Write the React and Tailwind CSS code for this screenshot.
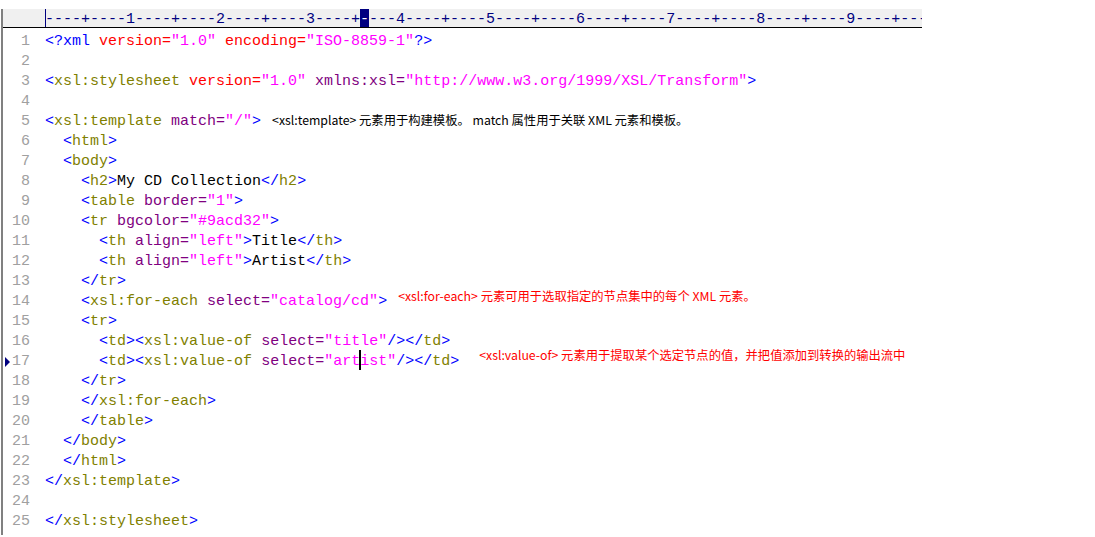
const b = "text-[#0000ff]";
const o = "text-[#808000]";
const r = "text-[#ff0000]";
const p = "text-[#800080]";
const m = "text-[#ff00ff]";
const k = "text-black";

const open = (name, attrs = [], close = ">") => [
  [b, "<"],
  [o, name],
  ...attrs.flatMap(([a, v, c]) => [[k, " "], [c || p, a + "="], [m, `"${v}"`]]),
  [b, close],
];
const end = (name) => [[b, "</"], [o, name], [b, ">"]];
const ind = (n) => [[k, " ".repeat(n)]];

const lines = [
  [[b, "<?xml"], [k, " "], [r, "version="], [m, '"1.0"'], [k, " "], [r, "encoding="], [m, '"ISO-8859-1"'], [b, "?>"]],
  [],
  open("xsl:stylesheet", [["version", "1.0", r], ["xmlns:xsl", "http://www.w3.org/1999/XSL/Transform"]]),
  [],
  open("xsl:template", [["match", "/"]]),
  [...ind(2), ...open("html")],
  [...ind(2), ...open("body")],
  [...ind(4), ...open("h2"), [k, "My CD Collection"], ...end("h2")],
  [...ind(4), ...open("table", [["border", "1"]])],
  [...ind(4), ...open("tr", [["bgcolor", "#9acd32"]])],
  [...ind(6), ...open("th", [["align", "left"]]), [k, "Title"], ...end("th")],
  [...ind(6), ...open("th", [["align", "left"]]), [k, "Artist"], ...end("th")],
  [...ind(4), ...end("tr")],
  [...ind(4), ...open("xsl:for-each", [["select", "catalog/cd"]])],
  [...ind(4), ...open("tr")],
  [...ind(6), ...open("td"), ...open("xsl:value-of", [["select", "title"]], "/>"), ...end("td")],
  "cursor",
  [...ind(4), ...end("tr")],
  [...ind(4), ...end("xsl:for-each")],
  [...ind(4), ...end("table")],
  [...ind(2), ...end("body")],
  [...ind(2), ...end("html")],
  end("xsl:template"),
  [],
  end("xsl:stylesheet"),
];

const notes = {
  5: { text: "<xsl:template> 元素用于构建模板。 match 属性用于关联 XML 元素和模板。", cls: "ml-[11px] -top-[2px] text-black" },
  14: { text: "<xsl:for-each> 元素可用于选取指定的节点集中的每个 XML 元素。", cls: "ml-[11px] -top-[6px] text-[#ff0000]" },
  17: { text: "<xsl:value-of> 元素用于提取某个选定节点的值，并把值添加到转换的输出流中", cls: "ml-[20px] -top-[7px] text-[#ff0000]" },
};

function rulerChar(i) {
  const n = i + 1;
  if (n % 10 === 0) return String(n / 10);
  if (n % 5 === 0) return "+";
  return "-";
}

function Ruler() {
  const chars = Array.from({ length: 98 }, (_, i) => rulerChar(i));
  const before = chars.slice(0, 35).join("");
  const after = chars.slice(36).join("");
  return (
    <div className="h-[19px] bg-[#f0f0f0] border-b border-black flex overflow-hidden">
      <div className="w-[42px] shrink-0" />
      <div className="whitespace-pre text-[#000080] text-[15px] leading-[18px] shadow-[inset_1px_0_0_#000080]">
        <span className="relative top-[2px]">{before}</span>
        <span className="inline-block bg-[#000080] text-white h-[18px]">
          <span className="relative top-[2px]">{chars[35]}</span>
        </span>
        <span className="relative top-[2px]">{after}</span>
      </div>
    </div>
  );
}

function CursorLine() {
  return (
    <>
      {ind(6).map(([c, t], i) => <span key={"i" + i} className={c}>{t}</span>)}
      {open("td").map(([c, t], i) => <span key={"a" + i} className={c}>{t}</span>)}
      <span className={b}>{"<"}</span>
      <span className={o}>xsl:value-of</span>
      <span> </span>
      <span className={p}>select=</span>
      <span className={m}>"art</span>
      <span className="relative">
        <span className="absolute -left-[1px] -top-[12px] w-[2px] h-[20px] bg-black" />
      </span>
      <span className={m}>ist"</span>
      <span className={b}>/&gt;</span>
      {end("td").map(([c, t], i) => <span key={"e" + i} className={c}>{t}</span>)}
    </>
  );
}

export default function App() {
  return (
    <div className="w-[1095px] h-[537px] bg-white overflow-hidden font-['Liberation_Mono',monospace]">
      <div className="mt-[9px] ml-[1px] w-[921px] h-[526px] border-l-2 border-[#808080]">
        <Ruler />
        <div className="pt-[4px]">
          {lines.map((line, idx) => {
            const n = idx + 1;
            const note = notes[n];
            return (
              <div key={n} className="flex h-[20px] items-center text-[15px] leading-[20px] whitespace-pre">
                <div className="relative w-[42px] shrink-0 pr-[15px] text-right text-[#a0a0a0]">
                  {n === 17 && (
                    <span className="absolute left-[2px] top-[5px] w-0 h-0 border-y-[5px] border-y-transparent border-l-[5px] border-l-[#000080]" />
                  )}
                  {n}
                </div>
                <div className="flex items-center">
                  {line === "cursor" ? (
                    <CursorLine />
                  ) : (
                    line.map(([c, t], i) => (
                      <span key={i} className={c}>{t}</span>
                    ))
                  )}
                  {note && (
                    <span className={`relative text-[12.3px] leading-[16px] font-['Noto_Sans_CJK_SC',sans-serif] ${note.cls}`}>
                      {note.text}
                    </span>
                  )}
                </div>
              </div>
            );
          })}
        </div>
      </div>
    </div>
  );
}
